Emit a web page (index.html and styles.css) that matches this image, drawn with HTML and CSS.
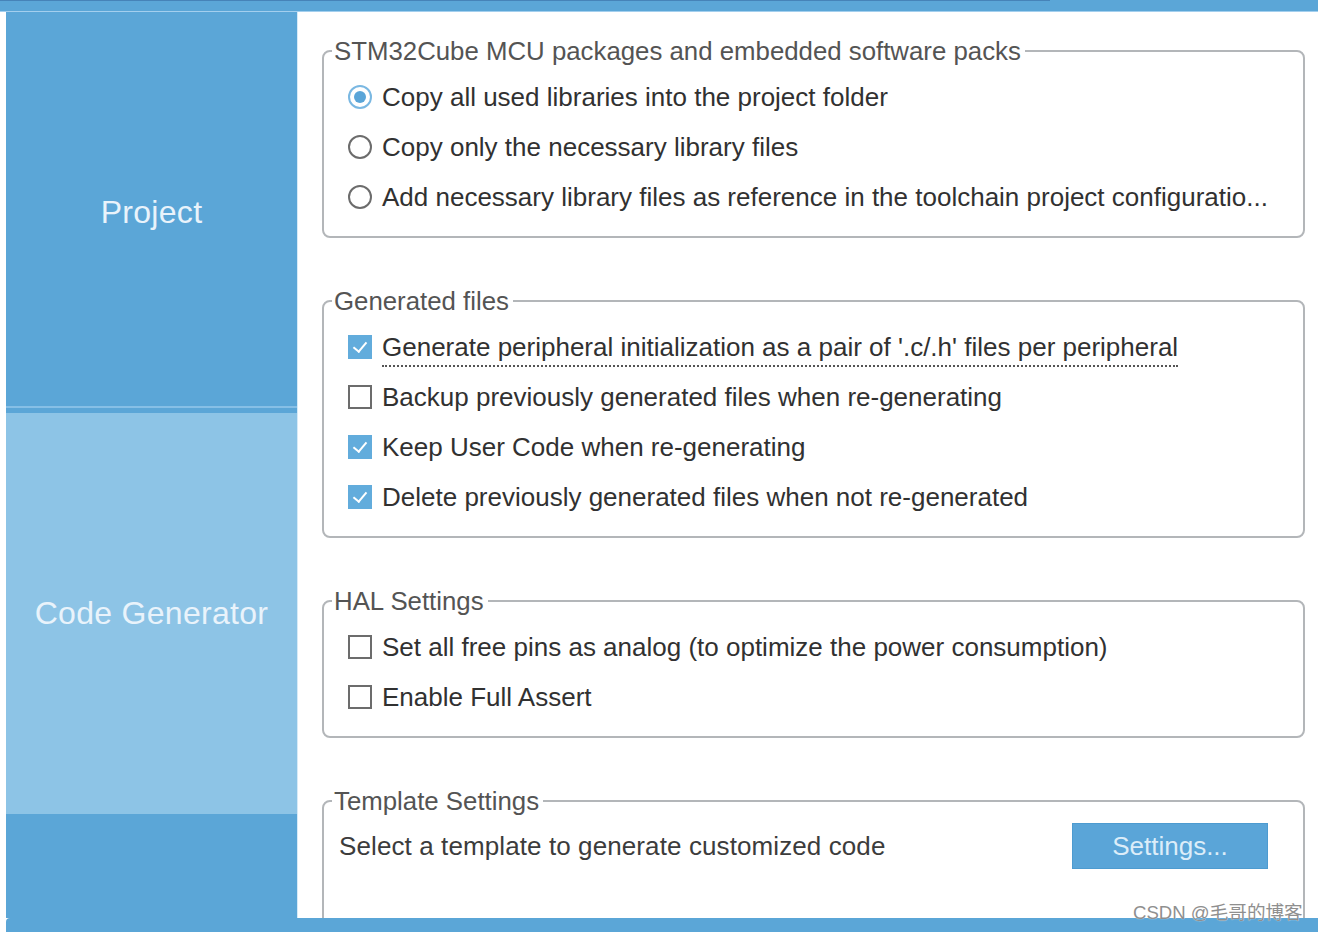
FILE: index.html
```html
<!DOCTYPE html>
<html lang="en">
<head>
<meta charset="utf-8">
<title>Project Manager - Code Generator</title>
<link rel="stylesheet" href="styles.css">
</head>
<body>
<div class="topbar"><div class="topbar-edge"></div></div>
<div class="main">
  <div class="gutter"></div>
  <nav class="sidebar">
    <div class="tab tab-project">Project</div>
    <div class="tab-sep"></div>
    <div class="tab tab-code">Code Generator</div>
    <div class="tab tab-rest"></div>
  </nav>
  <section class="content">
    <fieldset class="group">
      <legend>STM32Cube MCU packages and embedded software packs</legend>
      <div class="items">
        <label class="row"><span class="radio checked"></span><span class="txt">Copy all used libraries into the project folder</span></label>
        <label class="row"><span class="radio"></span><span class="txt">Copy only the necessary library files</span></label>
        <label class="row"><span class="radio"></span><span class="txt">Add necessary library files as reference in the toolchain project configuratio...</span></label>
      </div>
    </fieldset>

    <fieldset class="group">
      <legend>Generated files</legend>
      <div class="items">
        <label class="row"><span class="check checked"></span><span class="txt dotted">Generate peripheral initialization as a pair of '.c/.h' files per peripheral</span></label>
        <label class="row"><span class="check"></span><span class="txt">Backup previously generated files when re-generating</span></label>
        <label class="row"><span class="check checked"></span><span class="txt">Keep User Code when re-generating</span></label>
        <label class="row"><span class="check checked"></span><span class="txt">Delete previously generated files when not re-generated</span></label>
      </div>
    </fieldset>

    <fieldset class="group">
      <legend>HAL Settings</legend>
      <div class="items">
        <label class="row"><span class="check"></span><span class="txt">Set all free pins as analog (to optimize the power consumption)</span></label>
        <label class="row"><span class="check"></span><span class="txt">Enable Full Assert</span></label>
      </div>
    </fieldset>

    <fieldset class="group group-last">
      <legend>Template Settings</legend>
      <div class="template-row">
        <span class="template-txt">Select a template to generate customized code</span>
        <button class="btn">Settings...</button>
      </div>
    </fieldset>
  </section>
</div>
<div class="bottombar"></div>
<div class="watermark">CSDN @毛哥的博客</div>
</body>
</html>
```
FILE: styles.css
```css
html, body {
  margin: 0;
  padding: 0;
  background: #ffffff;
}
body {
  width: 1318px;
  height: 932px;
  overflow: hidden;
  position: relative;
  font-family: "Liberation Sans", Arial, "Noto Sans CJK SC", sans-serif;
}

.topbar {
  height: 11px;
  background: #5ba6d7;
  border-bottom: 1px solid #a3cfee;
}
.topbar-edge {
  width: 1050px;
  height: 1px;
  background: #4683b8;
}

.main {
  display: flex;
  height: 906px;
}
.gutter {
  width: 6px;
  flex: none;
  background: #ffffff;
}
.sidebar {
  width: 291px;
  flex: none;
  display: flex;
  flex-direction: column;
  border-right: 1px solid #d6eaf7;
}
.tab {
  display: flex;
  align-items: center;
  justify-content: center;
  color: #e9f3fb;
  font-size: 32px;
  letter-spacing: 0.3px;
}
.tab-project {
  height: 388px;
  padding-top: 6px;
  background: #5ba6d7;
}
.tab-sep {
  height: 5px;
  background: #5ba6d7;
  border-top: 2px solid #86bfe6;
}
.tab-code {
  height: 401px;
  background: #8dc4e6;
}
.tab-rest {
  flex: 1;
  background: #5ba6d7;
}

.content {
  flex: 1;
  padding: 26px 13px 0 24px;
  overflow: hidden;
  display: flex;
  flex-direction: column;
  gap: 50px;
}

.group {
  margin: 0;
  padding: 0;
  border: 2px solid #b3b6b9;
  border-radius: 8px;
  min-width: 0;
}
.group legend {
  margin-left: 8px;
  padding: 0 4px 0 2px;
  font-size: 25.8px;
  line-height: 26px;
  color: #545454;
}
.items {
  padding: 8px 0 14px 24px;
  display: flex;
  flex-direction: column;
}
.row {
  height: 50px;
  display: flex;
  align-items: center;
  gap: 10px;
  font-size: 26px;
  color: #313131;
  white-space: nowrap;
}
.txt {
  line-height: 26px;
}
.txt.dotted {
  border-bottom: 2px dotted #555555;
  padding-bottom: 5px;
  margin-top: 7px;
}

.radio {
  width: 20px;
  height: 20px;
  border: 2px solid #6c6c6c;
  border-radius: 50%;
  flex: none;
  box-sizing: content-box;
  position: relative;
}
.radio.checked {
  border-color: #7ab8e2;
}
.radio.checked::after {
  content: "";
  position: absolute;
  left: 4px;
  top: 4px;
  width: 12px;
  height: 12px;
  border-radius: 50%;
  background: #5aa5d8;
}

.check {
  width: 20px;
  height: 20px;
  border: 2px solid #6c6c6c;
  flex: none;
  position: relative;
}
.check.checked {
  border-color: #62acdc;
  background: #62acdc;
}
.check.checked::after {
  content: "";
  position: absolute;
  left: 6px;
  top: 2px;
  width: 6px;
  height: 11px;
  border-right: 2px solid #ffffff;
  border-bottom: 2px solid #ffffff;
  transform: rotate(40deg);
  transform-origin: center;
}

.group-last {
  flex: none;
  height: 200px;
}
.template-row {
  display: flex;
  align-items: center;
  justify-content: space-between;
  padding: 7px 35px 0 15px;
  height: 50px;
}
.template-txt {
  font-size: 26px;
  color: #3c3c3c;
  letter-spacing: 0.1px;
}
.btn {
  width: 196px;
  height: 46px;
  border: 1px solid #4d9bd0;
  background: #5aa5d8;
  color: #dcedf9;
  font-family: "Liberation Sans", Arial, sans-serif;
  font-size: 26px;
  padding: 0;
}

.bottombar {
  height: 14px;
  margin-left: 6px;
  background: #5ba6d7;
  border-top-left-radius: 4px;
}

.watermark {
  position: absolute;
  left: 1133px;
  top: 901px;
  font-size: 18.6px;
  line-height: 24px;
  color: #8f8f8f;
  font-family: "Liberation Sans", "Noto Sans CJK SC", sans-serif;
  text-shadow: 0 0 1px #ffffff;
}
```
